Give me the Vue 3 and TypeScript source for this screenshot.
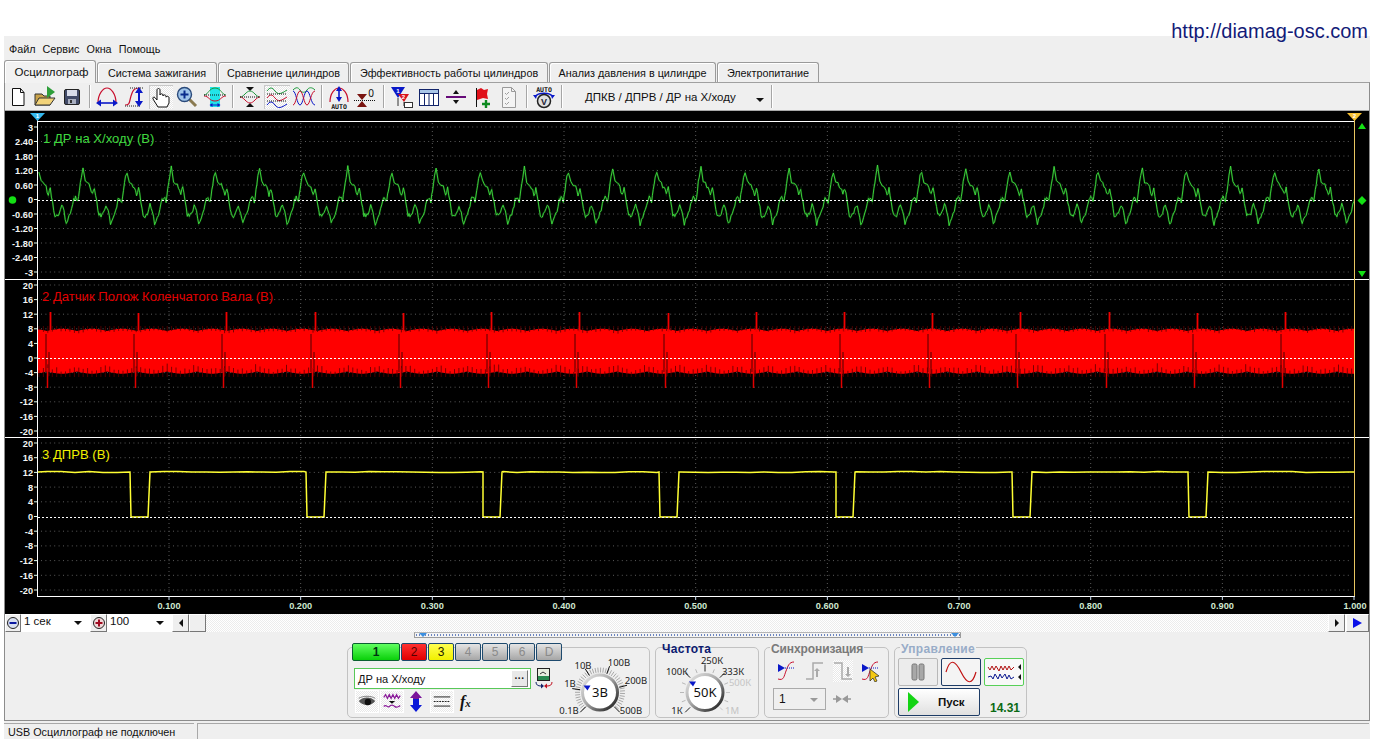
<script setup lang="ts">
interface Tick { x1: number; y1: number; x2: number; y2: number; c: string }

const menus = ['Файл', 'Сервис', 'Окна', 'Помощь']
const tabs = [
  { t: 'Осциллограф', w: 92 },
  { t: 'Система зажигания', w: 120 },
  { t: 'Сравнение цилиндров', w: 131 },
  { t: 'Эффективность работы цилиндров', w: 198 },
  { t: 'Анализ давления в цилиндре', w: 167 },
  { t: 'Электропитание', w: 102 },
]

function seeded(seed: number) {
  let s = seed
  return () => {
    s = (s * 16807) % 2147483647
    return (s - 1) / 2147483646
  }
}

const PL = 37
const PR = 1354

/* grid */
const panes = [
  { y0: 127, step: 14.5, zero: 200, labels: ['3', '2.40', '1.80', '1.20', '0.60', '0', '-0.60', '-1.20', '-1.80', '-2.40', '-3'] },
  { y0: 285, step: 14.6, zero: 358, labels: ['20', '16', '12', '8', '4', '0', '-4', '-8', '-12', '-16', '-20'] },
  { y0: 443, step: 14.7, zero: 517, labels: ['20', '16', '12', '8', '4', '0', '-4', '-8', '-12', '-16', '-20'] },
]
const yLabels = panes.flatMap(p => p.labels.map((t, i) => ({ t, y: p.y0 + p.step * i })))
const gridH = yLabels.filter(l => l.t !== '0').map(l => `M41 ${l.y}H1352`).join('')
const xMarks = Array.from({ length: 10 }, (_, i) => ({
  x: 169 + 131.67 * i,
  t: ((i + 1) / 10).toFixed(3),
}))
const gridV = xMarks.slice(0, 9).map(m => `M${m.x} 123V594`).join('')
const xTicks = xMarks.map(m => `M${m.x} 596v4`).join('')
const yTicks = yLabels.map(l => `M34 ${l.y}h3`).join('')

/* channel 1 */
const tpl: [number, number][] = [
  [248, 172], [255, 215], [262, 222], [270, 232], [277, 255], [283, 235], [290, 275], [297, 315],
  [303, 318], [310, 310], [318, 285], [325, 305], [332, 342], [340, 320], [348, 300], [355, 270],
  [360, 262], [367, 275], [372, 240], [378, 200],
]
function greenPath(): string {
  const r = seeded(77)
  const pts: string[] = []
  for (let n = -1; n < 30; n++) {
    const px = 83 + 44.14 * n
    const peak = n % 2 !== 0 ? 172 : ((n + 4) % 4 === 0 ? 167.5 : 165)
    tpl.forEach(([zx, zy], i) => {
      const x = px + ((zx - 248) / 3) * 0.981
      let y = 200 + (zy - 270) / 3
      if (i === 0) y = peak + r() * 1.5
      else y += (r() - 0.5) * 3.5
      pts.push(`${x.toFixed(1)} ${y.toFixed(1)}`)
      const nx = tpl[i + 1]
      if (i > 1 && nx) {
        const mx = x + ((nx[0] - zx) / 6) * 0.981
        const my = 200 + ((zy + nx[1]) / 2 - 270) / 3 + (r() - 0.5) * 4.5
        pts.push(`${mx.toFixed(1)} ${my.toFixed(1)}`)
      }
    })
  }
  return 'M' + pts.join('L')
}
const chan1 = greenPath()

/* channel 2 */
function redBand(): { band: string; notch: string; dark: string; spikes: string; down: string } {
  const r = seeded(31)
  const top: string[] = []
  const bot: string[] = []
  let notch = ''
  for (let x = PL + 1; x <= PR; x++) {
    const l = Math.abs(Math.sin((Math.PI * (x - 47)) / 30))
    top.push(`${x} ${(331 - l * 2.2).toFixed(1)}`)
    bot.unshift(`${x} ${(371.5 + l * 2.2).toFixed(1)}`)
  }
  for (let x = PL + 2; x < PR; x += 4.42) {
    const l = Math.abs(Math.sin((Math.PI * (x - 47)) / 30))
    const a = 0.5 + (1 - l) * 2.5 + r() * 2
    const b = 1 + (1 - l) * 5 + r() * 4
    notch += `M${x.toFixed(1)} 326V${(329 + a).toFixed(1)}M${x.toFixed(1)} 377V${(373 - b).toFixed(1)}`
  }
  let dark = ''
  let spikes = ''
  let down = ''
  for (let n = 0; n < 15; n++) {
    const x0 = Math.round(47 + 88.22 * n)
    dark += `M${x0 - 1} 334V372M${x0 + 2} 352V376`
    spikes += `M${x0 + 3.5} ${312 + (n % 3 === 1 ? 1 : 0)}V332`
    down += `M${x0 + 0.5} 368V388`
  }
  return { band: 'M' + top.join('L') + 'L' + bot.join('L') + 'Z', notch, dark, spikes, down }
}
const red = redBand()

/* channel 3 */
function yellowPath(): string {
  let d = `M${PL + 1} 472`
  const r = seeded(9)
  for (let n = 0; n < 7; n++) {
    const f = 130 + 176.4 * n
    for (let x = f - 176 + (n === 0 ? 93 : 20); x < f; x += 14) d += `L${x.toFixed(0)} ${(472 + (r() - 0.5) * 1.2).toFixed(1)}`
    d += `L${f.toFixed(0)} 472L${(f + 0.5).toFixed(0)} 517L${(f + 17.5).toFixed(0)} 517L${(f + 19.5).toFixed(0)} 472`
  }
  for (let x = 1222; x < PR; x += 14) d += `L${x} ${(472 + (r() - 0.5) * 1.2).toFixed(1)}`
  return d + `L${PR} 472`
}
const chan3 = yellowPath()

/* dials */
function polar(cx: number, cy: number, r: number, deg: number) {
  const a = ((deg - 90) * Math.PI) / 180
  return { x: cx + r * Math.cos(a), y: cy + r * Math.sin(a) }
}
function tick(cx: number, cy: number, r1: number, r2: number, deg: number, c: string): Tick {
  const p = polar(cx, cy, r1, deg)
  const q = polar(cx, cy, r2, deg)
  return { x1: p.x, y1: p.y, x2: q.x, y2: q.y, c }
}
const dial1: Tick[] = []
for (let d = -135; d <= 135; d += 6.5) dial1.push(tick(46, 44.5, 20, 25, d, '#a8a8a8'))
;[-135, -82, -32, 20, 75, 135].forEach(d => dial1.push(tick(46, 44.5, 20, 28, d, '#111')))
const dial2: Tick[] = []
;[-112, -90, -67, -22, 22, 67, 112].forEach(d => dial2.push(tick(49, 44.5, 21, 25, d, '#b8b8b8')))
;[-135, -45, 0, 45].forEach(d => dial2.push(tick(49, 44.5, 21, 28, d, '#222')))
;[90, 135].forEach(d => dial2.push(tick(49, 44.5, 21, 25, d, '#c8c8c8')))
</script>

<template>
  <div class="url">http://diamag-osc.com</div>
  <div class="app">
    <nav class="menu"><span v-for="m in menus" :key="m">{{ m }}</span></nav>

    <div class="tabs">
      <div
        v-for="(t, i) in tabs"
        :key="t.t"
        class="tab"
        :class="{ sel: i === 0 }"
        :style="{ width: t.w + 'px' }"
      >{{ t.t }}</div>
    </div>

    <div class="frame">
      <div class="toolbar">
        <span class="ti w26"><svg viewBox="0 0 24 24"><path d="M6.500 3.500h8l3.500 4v13H6.500z" fill="#fff" stroke="#111"/><path d="M14.500 3.500v4H18" fill="none" stroke="#111"/></svg></span>
        <span class="ti w27"><svg viewBox="0 0 24 24"><path d="M2 20V9h7l2 2h6v9z" fill="#c9a24a" stroke="#333"/><path d="M2 20l4-7h16l-5 7z" fill="#f2d37a" stroke="#333"/><path d="M14 1l8 6-8 6z" fill="#2e9e3a"/></svg></span>
        <span class="ti w28"><svg viewBox="0 0 24 24"><rect x="4.500" y="4.500" width="15" height="15" rx="1.500" fill="#414a68" stroke="#222"/><rect x="7" y="5" width="10" height="6" fill="#d8dcea"/><rect x="8" y="14" width="8" height="5" fill="#a8aebf"/><rect x="10" y="15" width="2" height="3" fill="#333"/></svg></span>
        <i class="sep"></i>
        <span class="ti w28"><svg viewBox="0 0 24 24"><path d="M3 18C3 9 8 3 12 3s9 6 9 15" fill="none" stroke="#c8102e" stroke-width="1.200"/><path d="M3 18h18" stroke="#0a18c8" stroke-width="1.600"/><path d="M1 18l5-3.500v7zM23 18l-5-3.500v7z" fill="#0a18c8"/></svg></span>
        <span class="ti w28"><svg viewBox="0 0 24 24"><path d="M2 20c5 0 4-2 6-9s4-8 9-8" fill="none" stroke="#c8102e" stroke-width="1.200"/><path d="M7 3h13M2 21h16" stroke="#222" stroke-dasharray="1 1"/><path d="M16 6v12" stroke="#0a18c8" stroke-width="2"/><path d="M16 2l4 6h-8zM16 22l4-6h-8z" fill="#0a18c8"/></svg></span>
        <span class="ti w24 hot"><svg viewBox="0 0 24 24"><path d="M9 22l-5-8c-.8-1.600 1-2.600 2-1.300L8 15V5c0-2 3-2 3 0v5c0-1.600 3-1.600 3 0v1c0-1.600 3-1.400 3 .2v1c0-1.400 3-1.200 3 .4V18l-2 4z" fill="#fff" stroke="#111"/></svg></span>
        <span class="ti w28"><svg viewBox="0 0 24 24"><path d="M14 14l7 7" stroke="#8a7a50" stroke-width="3"/><circle cx="9.500" cy="9.500" r="7" fill="#9fc4ea" stroke="#2b4a7a" stroke-width="1.400"/><path d="M5.500 9.500h8M9.500 5.500v8" stroke="#0a2c8c" stroke-width="2"/></svg></span>
        <span class="ti w28"><svg viewBox="0 0 24 24"><rect x="7" y="2" width="10" height="20" fill="#22e4e8"/><path d="M1 10c4 0 5-7 11-7s7 7 11 7" fill="none" stroke="#1d9a3c"/><path d="M1 9c5 0 5 5 11 5s6-5 11-5" fill="none" stroke="#c8102e" transform="translate(0 2)"/><path d="M1 10h22" stroke="#111" stroke-dasharray="1 1"/><path d="M8 20h8" stroke="#0a18c8"/><path d="M6.500 20l3-2v4zM17.500 20l-3-2v4z" fill="#0a18c8"/></svg></span>
        <i class="sep"></i>
        <span class="ti w28"><svg viewBox="0 0 24 24"><path d="M8 2h8l-4 4zM8 22h8l-4-4z" fill="#111"/><path d="M2 12c4 0 6-6 10-6s6 6 10 6" fill="none" stroke="#1d9a3c"/><path d="M2 12c4 0 6 6 10 6s6-6 10-6" fill="none" stroke="#c8102e"/><path d="M2 12h20" stroke="#111" stroke-dasharray="1 1"/></svg></span>
        <span class="ti w26 hot"><svg viewBox="0 0 24 24"><path d="M2 6c3-4 5-4 8 0s6 3 12-1" fill="none" stroke="#1d9a3c"/><path d="M2 13c3-4 5-4 8 0s6 3 12-1" fill="none" stroke="#c8102e"/><path d="M2 20c3-4 5-4 8 0s6 3 12-1" fill="none" stroke="#0a18c8"/><path d="M2 9h20M2 16h20" stroke="#111" stroke-dasharray="1 1"/></svg></span>
        <span class="ti w28"><svg viewBox="0 0 24 24"><path d="M1 5c3-3 5-3 7 0s5 3 7 0 5-3 8 0" fill="none" stroke="#1d9a3c"/><path d="M1 6c3 0 4 14 7 14s4-14 7-14 4 14 8 14" fill="none" stroke="#0a18c8"/><path d="M1 20c3 0 4-14 7-14s4 14 7 14 4-14 8-14" fill="none" stroke="#c8102e"/></svg></span>
        <i class="sep"></i>
        <span class="ti w28"><svg viewBox="0 0 24 24"><path d="M3 17C3 8 8 3 12 3s9 5 9 14" fill="none" stroke="#c8102e" stroke-width="1.200"/><path d="M12 5v9" stroke="#0a18c8" stroke-width="1.600"/><path d="M12 1l3 5H9zM12 17l3-5H9z" fill="#0a18c8"/><text x="12" y="23.500" class="auto">AUTO</text></svg></span>
        <span class="ti w24"><svg viewBox="0 0 24 24"><path d="M4 9h10l-5 6zM4 22h10l-5-6z" fill="#7a1410"/><path d="M1 15.500h22" stroke="#111" stroke-dasharray="1 1"/><text x="18" y="12" class="zero">0</text></svg></span>
        <i class="sep gap-l"></i>
        <span class="ti w28"><svg viewBox="0 0 24 24"><path d="M1 2h14l-7 11z" fill="#0a18c8"/><path d="M8 9h11l-5 8z" fill="#d8141c"/><path d="M8 13v8M14 17v4" stroke="#333"/><rect x="14.500" y="17.500" width="8" height="5" fill="#fff" stroke="#333"/><text x="8" y="8" class="mini">1</text><text x="13.500" y="14" class="mini">2</text></svg></span>
        <span class="ti w26"><svg viewBox="0 0 24 24"><rect x="2.500" y="4.500" width="19" height="16" fill="#fff" stroke="#12246a"/><rect x="3" y="5" width="18" height="3.500" fill="#a9c6e8"/><path d="M2.500 8.500h19M7.500 8.500v12M12 8.500v12M16.500 8.500v12" stroke="#12246a"/></svg></span>
        <span class="ti w27"><svg viewBox="0 0 24 24"><path d="M2 12h20" stroke="#660a78" stroke-width="2"/><path d="M9 9l3-4 3 4zM9 15l3 4 3-4z" fill="#111"/></svg></span>
        <span class="ti w26"><svg viewBox="0 0 24 24"><path d="M6.500 3v19" stroke="#111"/><path d="M7 5l4-2 3 2 4-1-1 5 1 5-5-1-3 1-3 1z" fill="#e0101a"/><path d="M12 19h8M16 15v8" stroke="#0c8a20" stroke-width="2.400"/></svg></span>
        <span class="ti w28"><svg viewBox="0 0 24 24"><path d="M5.500 2.500h9l4 4v16h-13z" fill="#f4f4f4" stroke="#9a9a9a"/><path d="M14.500 2.500v4h4" fill="none" stroke="#9a9a9a"/><path d="M8 8l1.500 1.500L12 7M8 13l1.500 1.500L12 12M8 18l1.500 1.500L12 17" fill="none" stroke="#a0a0a0"/></svg></span>
        <i class="sep"></i>
        <span class="ti w28"><svg viewBox="0 0 24 24"><text x="12" y="6.500" class="auto2">AUTO</text><path d="M3 12c3-5 15-5 18 0" fill="none" stroke="#0a18c8" stroke-width="1.400"/><path d="M1 10l4 0-1 4zM23 10l-4 0 1 4z" fill="#0a18c8"/><circle cx="12" cy="16" r="6.500" fill="#e0e0e0" stroke="#222" stroke-width="1.500"/><text x="12" y="19.500" class="vv">V</text></svg></span>
        <i class="sep"></i>
        <div class="preset"><span>ДПКВ / ДПРВ / ДР на Х/ходу</span><b class="arrow"></b></div>
        <i class="sep tight"></i>
      </div>

      <svg class="plot" viewBox="5 111 1364 503">
        <defs><clipPath id="pc"><rect x="38" y="122" width="1316" height="474"/></clipPath></defs>
        <rect x="5" y="111" width="1364" height="503" fill="#000"/>
        <path :d="gridH" stroke="#5a5a5a" stroke-dasharray="1 3.400" fill="none"/>
        <path :d="gridV" stroke="#5a5a5a" stroke-dasharray="1 3" fill="none"/>

        <g clip-path="url(#pc)">
          <path :d="chan1" fill="none" stroke="#1e8a1e" stroke-width="2" opacity=".3"/>
          <path :d="chan1" fill="none" stroke="#3fe03f" stroke-width=".9"/>
          <path :d="red.band" fill="#ff0000"/>
          <path :d="red.notch" stroke="#5a0000" stroke-width=".8" fill="none"/>
          <path :d="red.dark" stroke="#500000" stroke-width="1" fill="none"/>
          <path :d="red.spikes" stroke="#f00000" stroke-width="1.800" fill="none"/>
          <path :d="red.down" stroke="#e00000" stroke-width="1.500" fill="none"/>
          <path :d="chan3" fill="none" stroke="#ffff33" stroke-width="1.500"/>
        </g>

        <path d="M38 200.500H1354M38 358.500H1354M38 517.500H1354" stroke="#fff" stroke-dasharray="2 2"/>
        <path d="M5 279.500H1369M5 437.500H1369" stroke="#fff"/>
        <path d="M37 121.500H1355M37 596.500H1355" stroke="#fff"/>
        <path d="M37.500 114V596" stroke="#fff"/>
        <path :d="yTicks" stroke="#dfe" fill="none"/>
        <path :d="xTicks" stroke="#cde" fill="none"/>
        <path d="M1354.500 114V596" stroke="#e8c660"/>

        <text v-for="l in yLabels" :key="l.y" x="33" :y="l.y + 3.500" class="ylab">{{ l.t }}</text>
        <text v-for="m in xMarks" :key="m.t" :x="m.t === '1.000' ? 1355 : m.x" y="609" class="xlab">{{ m.t }}</text>

        <text x="43" y="143" class="ch" fill="#3fd83f">1 ДР на Х/ходу (В)</text>
        <text x="42" y="301" class="ch" fill="#e00000">2 Датчик Полож Коленчатого Вала (В)</text>
        <text x="42" y="459" class="ch" fill="#f0f000">3 ДПРВ (В)</text>

        <path d="M30 113h15l-7.500 8z" fill="#34b8ee"/>
        <text x="37.500" y="118" class="cur">1</text>
        <path d="M1347 113h15l-7.500 8z" fill="#f8c030"/>
        <text x="1354.500" y="118" class="cur">2</text>

        <circle cx="12.500" cy="200" r="3.800" fill="#14e014"/>
        <path d="M1358 129l4-6 4 6z M1362 196l4.500 4.500-4.500 4.500-4.500-4.500z M1358 271l4 6 4-6z" fill="#14e014"/>
      </svg>

      <div class="strip">
        <button class="rb"><svg viewBox="0 0 14 14"><circle cx="7" cy="7" r="5.500" fill="#d8e0f0" stroke="#222"/><path d="M3.500 7h7" stroke="#0a18a0" stroke-width="2"/></svg></button>
        <div class="sel s1">1 сек<b class="arrow"></b></div>
        <button class="rb plus"><svg viewBox="0 0 14 14"><circle cx="7" cy="7" r="5.500" fill="#f0d8d8" stroke="#222"/><path d="M3.500 7h7M7 3.500v7" stroke="#a00a20" stroke-width="2"/></svg></button>
        <div class="sel s2">100<b class="arrow"></b></div>
        <button class="sb left"><i class="tri-l"></i></button>
        <button class="sb thumb"></button>
        <div class="track"></div>
        <button class="sb"><i class="tri-r"></i></button>
        <button class="sb play"><i class="tri-b"></i></button>
      </div>

      <div class="panel">
        <div class="ruler"><i class="rm l"></i><i class="rm r"></i></div>
        <div class="groups">
          <section class="group g1">
            <div class="g1-left">
              <div class="chs">
                <button class="chb c1">1</button>
                <button class="chb c2">2</button>
                <button class="chb c3">3</button>
                <button class="chb">4</button>
                <button class="chb">5</button>
                <button class="chb">6</button>
                <button class="chb">D</button>
              </div>
              <div class="inrow">
                <div class="input"><span>ДР на Х/ходу</span><button class="dots">···</button></div>
                <svg class="xfer" viewBox="0 0 20 21"><rect x="3.500" y=".5" width="12" height="12" fill="#e8eee0" stroke="#222"/><rect x="4" y="8" width="11" height="4" fill="#2a8a50"/><path d="M6 6l3-2 3 2" fill="none" stroke="#333"/><path d="M2 14c0 3 2 4 5 4" fill="none" stroke="#12246a"/><path d="M7 15.500v5l3-2.500z" fill="#12246a"/><path d="M18 14c0 3-2 4-5 4" fill="none" stroke="#c01020"/><path d="M13 15.500v5l-3-2.500z" fill="#c01020"/></svg>
              </div>
              <div class="tools">
                <span class="tool on"><svg viewBox="0 0 24 23"><path d="M3 11c5-5 13-5 18 0-4 6-14 6-18 0z" fill="#555"/><circle cx="13" cy="12" r="3.500" fill="#111"/><path d="M3 8c5-3 13-3 18 0" fill="none" stroke="#777"/></svg></span>
                <span class="tool on"><svg viewBox="0 0 24 23"><path d="M3 7l2-3 2 4 2-4 2 4 2-4 2 4 2-4 2 4 2-3" fill="none" stroke="#8a1a9a" stroke-width="1.300"/><path d="M3 17c3-3 4 2 6 0s4-2 6 0 4 0 6-1" fill="none" stroke="#8a1a9a" stroke-width="1.300"/><path d="M8.500 11h7l-3.500 3z" fill="#111"/></svg></span>
                <span class="tool plain"><svg viewBox="0 0 18 23"><path d="M9 1l6 7h-3v6H6V8H3z" fill="#7a149a"/><path d="M9 22l6-7h-3V9H6v6H3z" fill="#0a18d8"/></svg></span>
                <span class="tool on wide"><svg viewBox="0 0 24 23"><path d="M3 6.500h18M3 16.500h18" stroke="#111"/><path d="M3 11.500h18" stroke="#111" stroke-dasharray="2 1"/></svg></span>
                <span class="fx"><i>f</i><i>x</i></span>
              </div>
            </div>
            <svg class="dial d1" viewBox="0 0 95 70">
              <defs>
                <linearGradient id="kn" x1="0" y1="0" x2="1" y2="1"><stop offset="0" stop-color="#e8e8e8"/><stop offset=".45" stop-color="#aaa"/><stop offset="1" stop-color="#111"/></linearGradient>
              </defs>
              <line v-for="(t, i) in dial1" :key="i" :x1="t.x1" :y1="t.y1" :x2="t.x2" :y2="t.y2" :stroke="t.c"/>
              <circle cx="46" cy="44.500" r="17.500" fill="#fff" stroke="url(#kn)" stroke-width="3"/>
              <path d="M29.500 37.500h7l-3 5z" fill="#0a18c8"/>
              <text x="46" y="49" class="dc">3В</text>
              <text x="29" y="20.500" class="dl">10В</text>
              <text x="65" y="17.500" class="dl">100В</text>
              <text x="16" y="38.500" class="dl">1В</text>
              <text x="82" y="35.500" class="dl">200В</text>
              <text x="15" y="65.500" class="dl">0.1В</text>
              <text x="77" y="65.500" class="dl">500В</text>
            </svg>
          </section>

          <section class="group g2">
            <h3 class="legend navy">Частота</h3>
            <svg class="dial d2" viewBox="0 0 102 70">
              <line v-for="(t, i) in dial2" :key="i" :x1="t.x1" :y1="t.y1" :x2="t.x2" :y2="t.y2" :stroke="t.c"/>
              <circle cx="49" cy="44.500" r="18" fill="#fff" stroke="url(#kn)" stroke-width="3"/>
              <path d="M33 33.500h7l-3 5z" fill="#0a18c8"/>
              <text x="49" y="49" class="dc">50K</text>
              <text x="56" y="15.500" class="dl">250К</text>
              <text x="21" y="26.500" class="dl">100К</text>
              <text x="77" y="26.500" class="dl">333К</text>
              <text x="84" y="37.500" class="dl faded">500К</text>
              <text x="21" y="65.500" class="dl">1К</text>
              <text x="76" y="65.500" class="dl faded">1М</text>
            </svg>
          </section>

          <section class="group g3">
            <h3 class="legend grayt">Синхронизация</h3>
            <div class="syncs">
              <svg viewBox="0 0 20 22"><path d="M1 4l7 4-7 4z" fill="#0a18c8"/><path d="M1 19c6 2 6-3 8-8s3-9 8-9" fill="none" stroke="#c8102e"/><path d="M8 8h10" stroke="#0a18c8" stroke-dasharray="1 1"/></svg>
              <svg viewBox="0 0 20 22"><path d="M1 19h7V3h10" fill="none" stroke="#aaa" stroke-width="1.500"/><path d="M12 8l-3 3h2v6h2v-6h2z" fill="#aaa"/></svg>
              <svg class="dith" viewBox="0 0 20 22"><path d="M1 3h8v16h10" fill="none" stroke="#aaa" stroke-width="1.500"/><path d="M15 17l3-3h-2V7h-2v7h-2z" fill="#aaa"/></svg>
              <svg viewBox="0 0 20 22"><path d="M1 4l7 4-7 4z" fill="#0a18c8"/><path d="M1 19c6 2 6-3 8-8s3-9 8-9" fill="none" stroke="#c8102e"/><path d="M8 8h10" stroke="#0a18c8" stroke-dasharray="1 1"/><path d="M9 9l9 7-4 1 2 4-2 1-2-4-3 3z" fill="#f4c810" stroke="#222" stroke-width=".7"/></svg>
            </div>
            <div class="syncrow">
              <div class="combo">1<b class="arrow gray"></b></div>
              <svg class="pinch" viewBox="0 0 20 10"><path d="M1 5h7M12 5h7" stroke="#999" stroke-width="1.500"/><path d="M10 5L4 1v8zM10 5l6-4v8z" fill="#999"/></svg>
            </div>
          </section>

          <section class="group g4">
            <h3 class="legend bluet">Управление</h3>
            <div class="ctl">
              <button class="cb pause"><svg viewBox="0 0 16 20"><rect x="2" y="2" width="5" height="16" rx="1.500" fill="#a8a8a8" stroke="#777"/><rect x="9" y="2" width="5" height="16" rx="1.500" fill="#a8a8a8" stroke="#777"/></svg></button>
              <button class="cb sine"><svg viewBox="0 0 32 22"><path d="M1 11C5-3 10-1 16 11s11 14 15 0" fill="none" stroke="#c01010" stroke-width="1.200"/></svg></button>
              <button class="cb multi"><svg viewBox="0 0 34 22"><path d="M1 6l2 3 2-4 2 4 2-4 3 5 2-5 2 4 2-4 2 4 2-4 2 4 3-3" fill="none" stroke="#b01010"/><path d="M1 16l3-1 2 3 2-5 3 5 2-5 2 4 3-4 2 5 2-4 2 4 3-2" fill="none" stroke="#0a1890"/><path d="M34 3v6l-3-3zM34 13v6l-3-3z" fill="#111"/></svg></button>
            </div>
            <div class="ctl second">
              <button class="start"><i class="go"></i><span>Пуск</span></button>
              <span class="fps">14.31</span>
            </div>
          </section>
        </div>
      </div>
    </div>

    <footer class="status">
      <div class="cell c-a">USB Осциллограф не подключен</div>
      <div class="cell c-b"></div>
    </footer>
  </div>
</template>

<style>
html, body { margin: 0; background: #fff; overflow: hidden; }
</style>

<style scoped>
.url {
  position: absolute; top: 20px; right: 14px;
  font: 20px "Liberation Sans", Arial, sans-serif;
  color: #131b78;
}
.app {
  margin: 36px 0 0 4px; width: 1366px; height: 703px;
  background: #efefef; display: flex; flex-direction: column;
  font: 10.800px "Liberation Sans", Arial, sans-serif; color: #111;
}
.menu { height: 24px; display: flex; align-items: center; gap: 7px; padding: 2px 0 0 5px; box-sizing: border-box; }
.tabs { height: 22px; display: flex; align-items: flex-end; }
.tab {
  box-sizing: border-box; height: 20px; margin-right: 1px;
  display: flex; align-items: center; justify-content: center;
  background: #efefef; border: 1px solid #9a9a9a; border-bottom: 0; border-radius: 3px 3px 0 0;
  box-shadow: inset 1px 1px 0 #fff;
}
.tab.sel { height: 23px; position: relative; top: 1px; z-index: 2; background: #f2f2f2; padding-bottom: 2px; }
.frame {
  box-sizing: border-box; height: 639px; border: 1px solid #8c8c8c; border-bottom: 1px solid #8c8c8c;
  border-top-color: #a0a0a0; display: flex; flex-direction: column;
}
.toolbar { height: 28px; flex: none; display: flex; align-items: center; box-sizing: border-box; border-bottom: 1px solid #a8a8a8; }
.ti { height: 24px; display: flex; justify-content: center; align-items: center; flex: none; }
.ti svg { width: 24px; height: 24px; display: block; flex: none; }
.w24 { width: 24px; } .w26 { width: 26px; } .w27 { width: 27px; } .w28 { width: 28px; }
.hot {
  background: repeating-conic-gradient(#fff 0 25%, #e6e6e6 0 50%) 0 0 / 2px 2px;
  box-shadow: inset 1px 1px 0 #c8c8c8;
}
.sep { width: 1px; height: 23px; background: #a6a6a6; margin: 0 3px; flex: none; box-shadow: 1px 0 0 #fff; }
.sep.gap-l { margin: 0 4px 0 6px; }
.sep.tight { margin: 0; }
.preset { width: 206px; flex: none; display: flex; align-items: center; padding-left: 20px; box-sizing: border-box; position: relative; font-size: 11.500px; }
.preset .arrow { position: absolute; right: 7px; top: 7px; }
.auto { font: bold 6.500px "DejaVu Sans Mono", monospace; text-anchor: middle; fill: #111; }
.auto2 { font: bold 6.500px "DejaVu Sans Mono", monospace; text-anchor: middle; fill: #111; }
.zero { font: 10px "Noto Sans", sans-serif; text-anchor: middle; fill: #111; }
.mini { font: bold 6px "Liberation Sans", sans-serif; text-anchor: middle; fill: #fff; }
.vv { font: bold 9px "Liberation Sans", sans-serif; text-anchor: middle; fill: #223; }

.plot { width: 1364px; height: 503px; display: block; flex: none; }
.ylab { font: bold 9.200px "Liberation Sans", sans-serif; fill: #f4f4f4; text-anchor: end; }
.xlab { font: bold 9.200px "Liberation Sans", sans-serif; fill: #cfe8cf; text-anchor: middle; }
.ch { font: 13.100px "Liberation Sans", sans-serif; }
.cur { font: bold 6px "Liberation Sans", sans-serif; fill: #fff; text-anchor: middle; }

.strip { height: 18px; flex: none; display: flex; background: #fff; }
button { padding: 0; margin: 0; font: inherit; color: inherit; }
.rb, .sb {
  box-sizing: border-box; flex: none; height: 18px; background: #efefef;
  border: 1px solid; border-color: #fff #777 #777 #fff; display: flex; align-items: center; justify-content: center;
}
.rb { width: 16px; } .rb.plus { width: 17px; }
.rb svg { width: 14px; height: 14px; }
.sel { box-sizing: border-box; height: 18px; flex: none; position: relative; padding: 1px 0 0 3px; font-size: 11.500px; }
.s1 { width: 69px; } .s2 { width: 65px; }
.sel .arrow { position: absolute; right: 8px; top: 7px; }
.arrow { display: block; width: 0; height: 0; border: 4px solid transparent; border-top: 4px solid #111; border-bottom: 0; }
.arrow.gray { border-top-color: #999; }
.sb { width: 17px; }
.track { flex: 1; background: repeating-conic-gradient(#fff 0 25%, #ececec 0 50%) 0 0 / 2px 2px; }
.sb.play { width: 23px; margin-left: 1px; }
.tri-l { border: 4px solid transparent; border-left: 0; border-right: 4px solid #111; }
.tri-r { border: 4px solid transparent; border-right: 0; border-left: 4px solid #111; }
.tri-b { border: 5px solid transparent; border-right: 0; border-left: 9px solid #0a10e8; }

.panel { flex: 1; display: flex; flex-direction: column; align-items: center; min-height: 0; }
.ruler {
  box-sizing: border-box; width: 547px; height: 6px; flex: none; position: relative;
  border: 1px solid #9c9c9c; border-top-color: #b5b5b5; background: radial-gradient(circle, #6a84c0 0 .7px, transparent 1px) 0 0 / 3px 4px #f4f4f4;
}
.rm { position: absolute; top: 0; border: 4px solid transparent; border-top: 4px solid #3a8fe0; border-bottom: 0; }
.rm.l { left: 4px; } .rm.r { right: 1px; }
.groups { display: flex; gap: 5px; margin-top: 9px; }
.group {
  box-sizing: border-box; height: 71px; border: 1px solid #c2c2c2; border-radius: 5px;
  position: relative; display: flex; flex: none;
}
.g1 { width: 303px; } .g2 { width: 104px; } .g3 { width: 125px; flex-direction: column; } .g4 { width: 133px; flex-direction: column; }
.legend {
  position: absolute; margin: 0; top: -7px; left: 5px; padding: 0 1px; background: #efefef;
  font: bold 12px "Liberation Sans", sans-serif; letter-spacing: .3px; line-height: 13px;
}
.navy { color: #0b1a70; top: -5px; background: transparent; }
.grayt { color: #7a7a7a; top: -5px; letter-spacing: -.1px; }
.bluet { color: #98acc8; top: -5px; }
.g1-left { width: 206px; flex: none; display: flex; flex-direction: column; padding-left: 4px; box-sizing: border-box; }
.chs { display: flex; gap: 1px; margin-top: -5px; }
.chb {
  box-sizing: border-box; width: 26px; height: 18px; border: 1px solid #1e4a6e; border-radius: 2px; flex: none;
  background: linear-gradient(#e4e4e4, #a6a6a6); color: #8a8a8a; font-size: 12px; line-height: 14px;
}
.chb.c1 { width: 48px; background: linear-gradient(#60ff60, #0ad00a); border-color: #0a6030; color: #031; font-weight: 700; }
.chb.c2 { background: linear-gradient(#ff3030, #e00000); color: #500; }
.chb.c3 { background: linear-gradient(#ffff50, #f0f000); color: #220; }
.inrow { display: flex; align-items: center; margin-top: 7px; padding-left: 2px; }
.input {
  box-sizing: border-box; width: 177px; height: 21px; background: #fff; border: 1px solid #58c858; flex: none;
  display: flex; align-items: center; justify-content: space-between; padding: 0 2px 0 3px; font-size: 11.100px;
}
.dots { box-sizing: border-box; width: 17px; height: 17px; background: #e8e8e8; border: 1px solid; border-color: #fff #777 #777 #fff; font-weight: 700; font-size: 10px; line-height: 12px; }
.xfer { width: 20px; height: 21px; margin-left: 3px; flex: none; }
.tools { display: flex; margin: 1px 0 0 3px; align-items: center; }
.tool { box-sizing: border-box; width: 24px; height: 23px; display: flex; flex: none; margin-right: 1px; }
.tool svg { width: 100%; height: 100%; }
.tool.on { background: repeating-conic-gradient(#fff 0 25%, #e8e8e8 0 50%) 0 0 / 2px 2px; border: 1px solid #fff; }
.tool.plain { width: 18px; margin: 0 5px 0 2px; }
.fx { font: bold 16px "Liberation Serif", serif; margin-left: 5px; }
.fx i:last-child { font-size: 11px; }
.dial { display: block; flex: none; height: 70px; }
.d1 { width: 95px; }
.d2 { width: 102px; }
.dl { font: 9.500px "Noto Sans", sans-serif; text-anchor: middle; fill: #222; }
.dl.faded { fill: #c4c4c4; }
.dc { font: 13px "Noto Sans", sans-serif; text-anchor: middle; fill: #111; }
.syncs { display: flex; gap: 8px; padding: 12px 0 0 12px; }
.syncs svg { width: 20px; height: 22px; flex: none; }
.syncs .dith { background: repeating-conic-gradient(#fff 0 25%, #e8e8e8 0 50%) 0 0 / 2px 2px; }
.syncrow { display: flex; align-items: center; gap: 6px; padding: 6px 0 0 8px; }
.combo {
  box-sizing: border-box; width: 53px; height: 22px; border: 1px solid #aaa; background: #efefef; position: relative;
  font-size: 12px; padding: 3px 0 0 5px;
}
.combo .arrow { position: absolute; right: 7px; top: 9px; }
.pinch { width: 20px; height: 10px; flex: none; }
.ctl { display: flex; gap: 3px; padding: 10px 0 0 3px; }
.ctl.second { padding-top: 2px; align-items: flex-end; }
.cb { box-sizing: border-box; width: 40px; height: 28px; border: 1px solid #b8b8b8; border-radius: 2px; background: #ececec; display: flex; align-items: center; justify-content: center; flex: none; }
.cb svg { height: 22px; width: 34px; }
.cb.pause svg { width: 16px; height: 20px; }
.cb.sine { background: #f4f4f4; border-color: #1e3c66; }
.cb.multi { border-color: #58d058; background: #f8f8f8; }
.start {
  box-sizing: border-box; width: 82px; height: 28px; border: 1px solid #1e3c66; border-radius: 2px; flex: none;
  background: linear-gradient(#fff, #e0e0e0); display: flex; align-items: center; padding-left: 9px;
  font: bold 11.500px "Liberation Sans", sans-serif; gap: 19px;
}
.go { border: 10px solid transparent; border-right: 0; border-left: 11px solid #14d414; }
.fps { font: bold 12px "Liberation Sans", sans-serif; color: #0a6a14; margin-left: 7px; line-height: 14px; padding-bottom: 1px; }

.status { flex: 1; display: flex; padding-top: 2px; min-height: 0; }
.cell { box-sizing: border-box; border-top: 1px solid #a8a8a8; }
.c-a { width: 190px; padding-left: 4px; line-height: 16px; }
.c-b { flex: 1; margin-left: 3px; border-left: 1px solid #a8a8a8; margin-right: 1px; }
</style>
